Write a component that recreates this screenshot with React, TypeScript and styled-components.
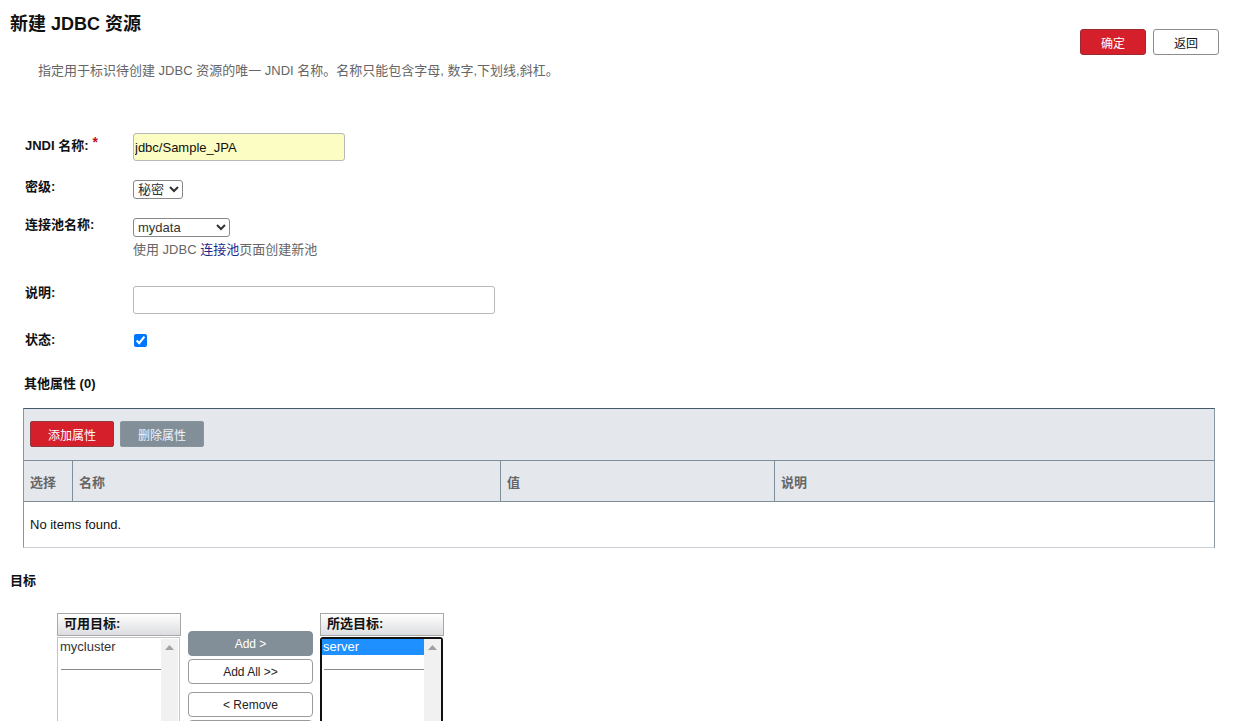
import React from "react";
import styled, { createGlobalStyle } from "styled-components";

const GlobalStyle = createGlobalStyle`
  body {
    margin: 0;
    background: #ffffff;
    font-family: "Liberation Sans", "Noto Sans CJK SC", sans-serif;
    font-size: 13px;
    color: #222;
  }
`;

const Page = styled.div`
  padding: 0 18px 0 10px;
  height: 721px;
  overflow: hidden;
  box-sizing: border-box;
`;

const Header = styled.div`
  display: flex;
  justify-content: space-between;
  align-items: flex-start;
`;

const Title = styled.h1`
  margin: 12px 0 0;
  font-size: 18px;
  line-height: 24px;
  font-weight: bold;
  color: #111;
`;

const HeaderButtons = styled.div`
  display: flex;
  gap: 7px;
  margin-top: 29px;
`;

const PageButton = styled.button<{ primary?: boolean }>`
  width: 66px;
  height: 26px;
  border-radius: 3px;
  font-family: inherit;
  font-size: 12px;
  cursor: pointer;
  border: 1px solid ${(p) => (p.primary ? "#9a2a30" : "#8c8c8c")};
  background: ${(p) => (p.primary ? "#d5202c" : "#ffffff")};
  color: ${(p) => (p.primary ? "#ffffff" : "#111")};
`;

const Description = styled.div`
  margin: 8px 0 0 28px;
  font-size: 13px;
  line-height: 16px;
  color: #666;
`;

const Form = styled.div`
  margin: 54px 0 0 15px;
`;

const Row = styled.div<{ top: number }>`
  display: grid;
  grid-template-columns: 108px 1fr;
  align-items: start;
  margin-top: ${(p) => p.top}px;
`;

const Label = styled.div<{ offset: number }>`
  margin-top: ${(p) => p.offset}px;
  font-weight: bold;
  font-size: 13px;
  line-height: 16px;
  color: #111;
`;

const Required = styled.sup`
  color: #c01020;
  font-size: 14px;
  margin-left: 4px;
  vertical-align: 3px;
  line-height: 0;
`;

const TextInput = styled.input<{ w: number; highlight?: boolean }>`
  width: ${(p) => p.w}px;
  height: 28px;
  box-sizing: border-box;
  border: 1px solid #b8b8b8;
  border-radius: 3px;
  padding: 0 1px;
  font-family: inherit;
  font-size: 13px;
  color: #111;
  background: ${(p) => (p.highlight ? "#fbfdc2" : "#ffffff")};
`;

const Select = styled.select<{ w: number }>`
  width: ${(p) => p.w}px;
  height: 19px;
  font-family: inherit;
  font-size: 13px;
  color: #333;
  border: 1px solid #888;
  border-radius: 3px;
  background: #fff;
  padding: 0;
`;

const Help = styled.div`
  margin-top: 5px;
  font-size: 13px;
  line-height: 16px;
  color: #666;
`;

const HelpLink = styled.a`
  color: #1a2a8a;
  text-decoration: none;
`;

const Checkbox = styled.input`
  width: 13px;
  height: 13px;
  margin: 2px 0 0 1px;
`;

const SectionTitle = styled.div<{ top: number; left: number }>`
  margin: ${(p) => p.top}px 0 0 ${(p) => p.left}px;
  font-weight: bold;
  font-size: 13px;
  line-height: 16px;
  color: #111;
`;

const Table = styled.div`
  margin: 16px 4px 0 13px;
  border: 1px solid #8796a0;
  border-top-color: #44596a;
  border-bottom-color: #c9cfd4;
`;

const Toolbar = styled.div`
  display: flex;
  gap: 6px;
  height: 52px;
  box-sizing: border-box;
  padding: 12px 0 0 6px;
  background: #e4e8ed;
  border-bottom: 1px solid #7f8e99;
`;

const ToolButton = styled.button<{ danger?: boolean }>`
  width: 84px;
  height: 26px;
  border-radius: 2px;
  font-family: inherit;
  font-size: 12px;
  color: ${(p) => (p.danger ? "#ffffff" : "#eef4ff")};
  background: ${(p) => (p.danger ? "#d5202c" : "#828f98")};
  border: 1px solid ${(p) => (p.danger ? "#8f3a40" : "#8a969e")};
`;

const HeadRow = styled.div`
  display: grid;
  grid-template-columns: 49px 428px 274px 1fr;
  height: 40px;
  background: #e4e8ed;
  border-bottom: 1px solid #7f8e99;
`;

const HeadCell = styled.div<{ last?: boolean }>`
  display: flex;
  align-items: center;
  padding-left: 6px;
  font-weight: bold;
  font-size: 13px;
  color: #666;
  border-right: ${(p) => (p.last ? "none" : "1px solid #7f8e99")};
`;

const EmptyRow = styled.div`
  height: 45px;
  display: flex;
  align-items: center;
  padding-left: 6px;
  font-size: 13px;
  color: #111;
`;

const Transfer = styled.div`
  display: flex;
  align-items: flex-start;
  margin: 24px 0 0 47px;
`;

const ListColumn = styled.div`
  width: 124px;
`;

const ListHeader = styled.div`
  height: 23px;
  box-sizing: border-box;
  border: 1px solid #a8a8a8;
  background: linear-gradient(#ffffff, #dcdde0);
  padding: 2px 0 0 6px;
  font-weight: bold;
  font-size: 13px;
  line-height: 16px;
  color: #111;
`;

const ListBox = styled.div<{ focused?: boolean }>`
  display: flex;
  width: 123px;
  height: 100px;
  box-sizing: border-box;
  margin-top: 1px;
  border: ${(p) => (p.focused ? "2px solid #111" : "1px solid #c4c4c4")};
  border-radius: ${(p) => (p.focused ? "3px" : "0")};
  padding: ${(p) => (p.focused ? "0" : "1px")};
`;

const Options = styled.div`
  flex: 1;
`;

const Option = styled.div<{ selected?: boolean }>`
  height: 16px;
  line-height: 16px;
  padding-left: 1px;
  font-size: 13px;
  color: ${(p) => (p.selected ? "#ffffff" : "#333")};
  background: ${(p) => (p.selected ? "#1e90ff" : "transparent")};
`;

const Divider = styled.div`
  margin: 14px 0 0 2px;
  width: 100px;
  border-top: 1px solid #8a8a8a;
`;

const Scrollbar = styled.div`
  width: 17px;
  background: #f1f1f1;
  display: flex;
  justify-content: center;
  padding-top: 6px;
  box-sizing: border-box;
`;

const MoveButtons = styled.div`
  display: flex;
  flex-direction: column;
  margin: 18px 7px 0 7px;
`;

const MoveButton = styled.button<{ active?: boolean; top: number }>`
  width: 125px;
  height: 25px;
  margin-top: ${(p) => p.top}px;
  border-radius: 4px;
  font-family: inherit;
  font-size: 12px;
  color: ${(p) => (p.active ? "#ffffff" : "#222")};
  background: ${(p) => (p.active ? "#828f98" : "#ffffff")};
  border: 1px solid ${(p) => (p.active ? "#828f98" : "#9a9a9a")};
`;

const UpArrow = () => (
  <svg width="9" height="5" viewBox="0 0 9 5">
    <path d="M0 5 L4.5 0 L9 5 Z" fill="#a3a3a3" />
  </svg>
);

const App = () => (
  <>
    <GlobalStyle />
    <Page>
      <Header>
        <Title>新建 JDBC 资源</Title>
        <HeaderButtons>
          <PageButton primary>确定</PageButton>
          <PageButton>返回</PageButton>
        </HeaderButtons>
      </Header>
      <Description>
        指定用于标识待创建 JDBC 资源的唯一 JNDI 名称。名称只能包含字母, 数字,下划线,斜杠。
      </Description>

      <Form>
        <Row top={0}>
          <Label offset={5}>
            JNDI 名称:<Required>*</Required>
          </Label>
          <TextInput w={212} highlight defaultValue="jdbc/Sample_JPA" />
        </Row>
        <Row top={19}>
          <Label offset={-1}>密级:</Label>
          <Select w={50} defaultValue="secret">
            <option value="secret">秘密</option>
          </Select>
        </Row>
        <Row top={19}>
          <Label offset={-1}>连接池名称:</Label>
          <div>
            <Select w={97} defaultValue="mydata">
              <option value="mydata">mydata</option>
            </Select>
            <Help>
              使用 JDBC <HelpLink href="#">连接池</HelpLink>页面创建新池
            </Help>
          </div>
        </Row>
        <Row top={28}>
          <Label offset={-1}>说明:</Label>
          <TextInput w={362} />
        </Row>
        <Row top={18}>
          <Label offset={0}>状态:</Label>
          <Checkbox type="checkbox" defaultChecked />
        </Row>
      </Form>

      <SectionTitle top={28} left={14}>
        其他属性 (0)
      </SectionTitle>
      <Table>
        <Toolbar>
          <ToolButton danger>添加属性</ToolButton>
          <ToolButton>删除属性</ToolButton>
        </Toolbar>
        <HeadRow>
          <HeadCell>选择</HeadCell>
          <HeadCell>名称</HeadCell>
          <HeadCell>值</HeadCell>
          <HeadCell last>说明</HeadCell>
        </HeadRow>
        <EmptyRow>No items found.</EmptyRow>
      </Table>

      <SectionTitle top={25} left={0}>
        目标
      </SectionTitle>
      <Transfer>
        <ListColumn>
          <ListHeader>可用目标:</ListHeader>
          <ListBox>
            <Options>
              <Option>mycluster</Option>
              <Divider />
            </Options>
            <Scrollbar>
              <UpArrow />
            </Scrollbar>
          </ListBox>
        </ListColumn>
        <MoveButtons>
          <MoveButton active top={0}>Add &gt;</MoveButton>
          <MoveButton top={3}>Add All &gt;&gt;</MoveButton>
          <MoveButton top={8}>&lt; Remove</MoveButton>
          <MoveButton top={3} aria-label="Remove All" />
        </MoveButtons>
        <ListColumn>
          <ListHeader>所选目标:</ListHeader>
          <ListBox focused>
            <Options>
              <Option selected>server</Option>
              <Divider />
            </Options>
            <Scrollbar>
              <UpArrow />
            </Scrollbar>
          </ListBox>
        </ListColumn>
      </Transfer>
    </Page>
  </>
);

export default App;
